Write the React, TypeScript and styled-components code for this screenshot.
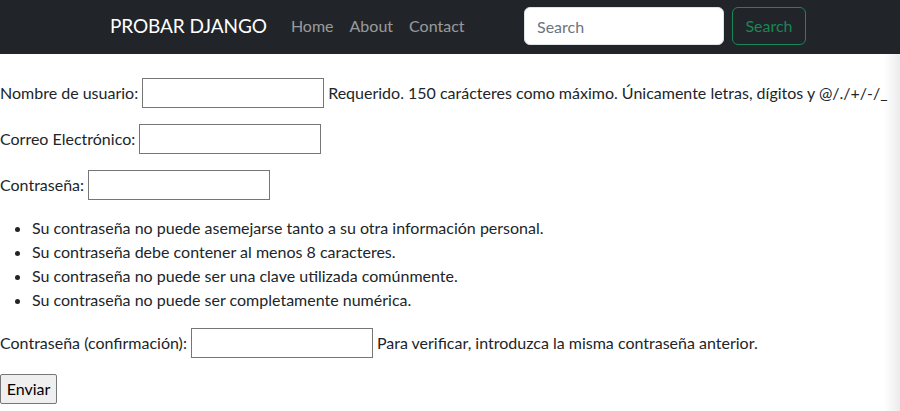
import React from "react";
import styled, { createGlobalStyle } from "styled-components";

const GlobalStyle = createGlobalStyle`
  *, *::before, *::after { box-sizing: border-box; }
  body {
    margin: 0;
    font-family: Lato, "Liberation Sans", sans-serif;
    font-size: 16px;
    line-height: 1.5;
    color: #212529;
    background: linear-gradient(to right, #ffffff calc(100% - 16px), #ececec 100%);
    min-height: 411px;
  }
`;

const Navbar = styled.nav`
  background: #212529;
  padding: 7px 0 9px;
`;

const NavContainer = styled.div`
  width: 696px;
  height: 38px;
  margin-left: 110px;
  display: flex;
  align-items: center;
`;

const Brand = styled.a`
  color: #fff;
  font-size: 19px;
  line-height: 30px;
  letter-spacing: -0.1px;
  text-decoration: none;
  margin-right: 16px;
  white-space: nowrap;
`;

const NavList = styled.ul`
  display: flex;
  list-style: none;
  margin: 0 auto 0 0;
  padding: 0;
`;

const NavLink = styled.a`
  display: block;
  padding: 7px 8px;
  color: rgba(255, 255, 255, 0.55);
  text-decoration: none;
`;

const SearchForm = styled.form`
  display: flex;
  gap: 8px;
`;

const SearchInput = styled.input`
  width: 200px;
  height: 38px;
  padding: 6px 12px;
  font: inherit;
  color: #212529;
  background: #fff;
  border: 1px solid #dee2e6;
  border-radius: 6px;
  &::placeholder { color: #6c757d; }
`;

const OutlineButton = styled.button`
  width: 74px;
  height: 38px;
  padding: 6px 0;
  font: inherit;
  color: #198754;
  background: transparent;
  border: 1px solid #198754;
  border-radius: 6px;
`;

const Main = styled.form`
  padding-top: 24px;
`;

const Row = styled.p`
  display: flex;
  align-items: center;
  height: 30px;
  margin: 0 0 16px;
  white-space: nowrap;
`;

const Label = styled.label`
  margin-right: 4px;
`;

const Field = styled.input`
  width: 182px;
  height: 30px;
  margin: 0 4px 0 0;
  padding: 1px 2px;
  font: inherit;
  border: 1px solid #767676;
  border-radius: 0;
  background: #fff;
`;

const HelpText = styled.span``;

const Rules = styled.ul`
  margin: 0 0 16px;
  padding-left: 32px;
`;

const SubmitButton = styled.button`
  width: 57px;
  height: 30px;
  padding: 0;
  font: inherit;
  color: #000;
  background: #efefef;
  border: 1px solid #767676;
  border-radius: 2px;
`;

export default function App() {
  return (
    <>
      <GlobalStyle />
      <Navbar>
        <NavContainer>
          <Brand href="#">PROBAR DJANGO</Brand>
          <NavList>
            <li><NavLink href="#">Home</NavLink></li>
            <li><NavLink href="#">About</NavLink></li>
            <li><NavLink href="#">Contact</NavLink></li>
          </NavList>
          <SearchForm onSubmit={(e) => e.preventDefault()}>
            <SearchInput type="search" placeholder="Search" />
            <OutlineButton type="submit">Search</OutlineButton>
          </SearchForm>
        </NavContainer>
      </Navbar>
      <Main onSubmit={(e) => e.preventDefault()}>
        <Row>
          <Label htmlFor="u">Nombre de usuario:</Label>
          <Field id="u" type="text" />
          <HelpText>Requerido. 150 carácteres como máximo. Únicamente letras, dígitos y @/./+/-/_</HelpText>
        </Row>
        <Row>
          <Label htmlFor="e">Correo Electrónico:</Label>
          <Field id="e" type="email" />
        </Row>
        <Row>
          <Label htmlFor="p1">Contraseña:</Label>
          <Field id="p1" type="password" />
        </Row>
        <Rules>
          <li>Su contraseña no puede asemejarse tanto a su otra información personal.</li>
          <li>Su contraseña debe contener al menos 8 caracteres.</li>
          <li>Su contraseña no puede ser una clave utilizada comúnmente.</li>
          <li>Su contraseña no puede ser completamente numérica.</li>
        </Rules>
        <Row>
          <Label htmlFor="p2">Contraseña (confirmación):</Label>
          <Field id="p2" type="password" />
          <HelpText>Para verificar, introduzca la misma contraseña anterior.</HelpText>
        </Row>
        <SubmitButton type="submit">Enviar</SubmitButton>
      </Main>
    </>
  );
}
